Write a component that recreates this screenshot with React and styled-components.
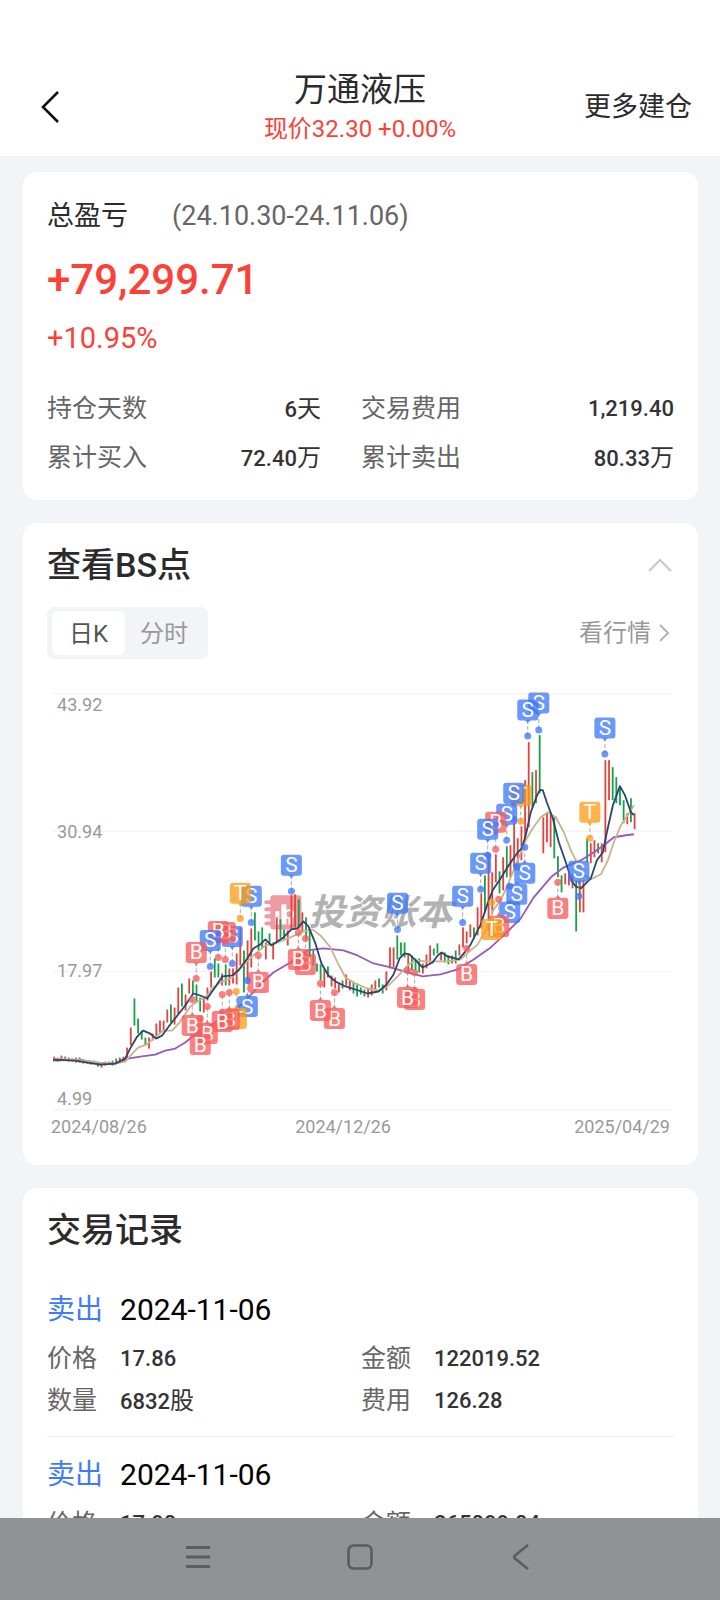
import { useState } from 'react';
import styled, { createGlobalStyle } from 'styled-components';

const GlobalStyle = createGlobalStyle`
  * {
    box-sizing: border-box;
  }
  body {
    margin: 0;
    background: #f2f4f7;
    font-family: Roboto, "Noto Sans CJK SC", sans-serif;
    color: #2b2b2b;
  }
  button {
    border: 0;
    padding: 0;
    background: none;
    font-family: inherit;
    cursor: pointer;
  }
`

const stats = [
  { label: "持仓天数", value: "6", unit: "天" },
  { label: "交易费用", value: "1,219.40" },
  { label: "累计买入", value: "72.40", unit: "万" },
  { label: "累计卖出", value: "80.33", unit: "万" },
]

const records = [
  { id: 1, side: "卖出", date: "2024-11-06", price: "17.86", amount: "122019.52", count: "6832", fee: "126.28" },
  { id: 2, side: "卖出", date: "2024-11-06", price: "17.90", amount: "265099.04", count: "14810", fee: "274.06" },
]

// one entry per trading day: colour, high, low (chart units)
const candles = `
r1056,1060 g1057,1061 r1055,1060 r1056,1060 g1057,1061 r1058,1061 r1057,1062 g1057,1062
r1059,1063 g1060,1063 r1060,1064 r1060,1063 g1061,1066 r1063,1067 r1061,1065 g1061,1064
g1060,1065 r1058,1062 g1057,1061 r1056,1061 r1047,1058 r1027,1045 g998,1025 g1018,1033
g1030,1039 g1037,1045 r1037,1048 r1033,1040 r1023,1037 r1020,1033 r1020,1030 r1009,1022
g1004,1022 r1007,1024 r987,1014 g983,1006 r994,1010 r978,993 g980,993 g984,1002
g997,1011 r997,1012 r987,1000 r971,987 g958,977 g963,977 r973,985 g964,985
r968,985 r968,983 r953,984 r927,965 g950,992 r940,983 r928,967 g912,940
g931,950 g927,948 r942,959 g933,943 r942,959 r917,942 g919,938 g929,940
r930,945 r895,928 r894,927 g899,927 r912,932 g917,940 g930,958 g950,965
g963,971 g964,980 r969,987 g966,977 r975,986 r977,988 r982,992 g980,988
r974,985 r980,990 g982,993 g983,996 g987,994 g989,996 r988,997 r984,995
r980,989 g978,987 g984,993 r971,990 r947,968 r947,967 g935,959 g942,955
g942,957 r953,972 g955,970 g958,970 g958,972 r963,973 r954,968 r945,963
g948,955 g943,953 r952,960 g952,962 g955,964 r955,963 g950,963 r944,955
r927,947 r931,943 r924,937 g927,937 r907,935 r893,928 g875,912 r857,930
r872,910 r854,882 g871,893 r857,890 g846,877 r845,877 r823,867 r838,863
r826,860 r780,842 r742,827 g772,807 r770,803 g735,793 r817,853 r813,842
r812,847 g817,858 g856,877 g875,892 r873,884 r873,885 r873,888 g880,931
r880,912 r880,912 g838,862 r843,863 r840,857 g843,853 r843,862 r760,852
r760,800 g767,800 g777,803 g787,805 g800,823 r813,824 g798,822 r813,829
`.trim().split(/\s+/).map((c) => {
  const [high, low] = c.slice(1).split(",").map(Number);
  return { up: c[0] === "r", high, low };
})

const averages = [
  { color: "#9b59b6", points: "53,1060 80,1059 100,1063 115,1063 128,1058 140,1056 155,1054 165,1050 175,1048 185,1042 200,1030 215,1022 240,1005 250,995 262,982 273,972 290,962 307,950 323,948 343,950 357,955 373,963 390,967 407,972 422,976 440,974 457,969 473,959 490,947 503,935 520,918 533,897 550,877 563,867 580,860 593,852 603,845 613,837 625,835 633,834" },
  { color: "#c8b48c", points: "53,1058 75,1059 100,1062 115,1063 125,1061 133,1052 138,1047 146,1044 156,1036 163,1030 172,1030 180,1021 190,1006 197,1001 205,997 212,988 220,982 232,977 243,965 253,955 265,945 275,943 290,937 303,931 312,929 320,935 330,947 337,962 345,977 355,983 367,988 378,990 388,985 398,975 408,964 415,960 425,961 447,961 460,959 470,950 477,944 485,930 493,909 500,900 508,882 515,865 525,840 532,828 540,817 547,812 555,817 563,832 570,850 576,862 582,874 590,879 600,874 607,860 613,842 620,825 628,813 633,805" },
  { color: "#28466e", points: "53,1059 75,1060 100,1064 115,1063 125,1058 130,1048 137,1036 143,1030 150,1033 156,1038 162,1035 170,1024 178,1014 185,1005 193,993 200,995 207,998 214,988 222,976 232,975 238,970 247,958 253,948 260,944 265,939 271,945 283,937 291,929 297,928 303,921 308,926 315,943 321,963 328,975 335,981 345,986 355,989 367,993 378,991 386,984 393,974 399,958 404,953 409,954 417,962 422,967 432,962 437,955 441,952 447,956 458,959 464,952 470,944 480,924 487,903 492,890 500,878 508,865 517,852 521,848 525,835 530,812 536,796 539,790 542,790 546,802 552,818 558,842 565,862 571,881 575,886 580,888 585,883 590,878 596,860 602,852 606,832 612,805 619,786 624,795 630,812 633,815" },
]

// [type, x, badge y, dot y]
const marks = [
  ["B", 196, 952, 978], ["S", 210, 940, 966], ["B", 218, 931, 957], ["B", 225, 932, 959],
  ["S", 232, 936, 963], ["T", 240, 893, 918], ["S", 251, 896, 922], ["B", 192, 1025, 999],
  ["B", 207, 1033, 1006], ["B", 200, 1044, 1018], ["B", 222, 1021, 994], ["B", 229, 1019, 992],
  ["T", 236, 1018, 991], ["S", 247, 1006, 980], ["B", 258, 982, 955], ["S", 291, 865, 891],
  ["B", 298, 959, 932], ["B", 305, 964, 938], ["B", 320, 1010, 983], ["B", 334, 1018, 992],
  ["S", 397, 903, 929], ["B", 407, 997, 970], ["B", 414, 999, 972], ["S", 462, 896, 922],
  ["B", 466, 974, 948], ["S", 480, 863, 889], ["S", 487, 829, 855], ["B", 495, 822, 849],
  ["S", 506, 814, 840], ["S", 513, 793, 819], ["T", 520, 795, 821], ["S", 527, 710, 736],
  ["S", 538, 703, 730], ["S", 604, 728, 754], ["T", 589, 812, 838], ["B", 557, 908, 882],
  ["S", 578, 871, 896], ["S", 524, 873, 847], ["S", 516, 894, 867], ["S", 509, 912, 886],
  ["B", 498, 926, 899], ["T", 491, 929, 902],
].sort((a, b) => b[1] - a[1])

const markColors = { B: "#fa5a5a", S: "#3c78fa", T: "#ff9b14" }

const gridLines = [
  { y: 694, label: "43.92", textY: 711 },
  { y: 831, label: "30.94", textY: 838 },
  { y: 971, label: "17.97", textY: 977 },
  { y: 1109, label: "4.99", textY: 1104 },
]

const Mark = ({ type, x, y, dot }) => {
  const dir = dot > y ? 1 : -1;
  const edge = y + dir * 10;
  return (
    <g>
      <line x1={x} x2={x} y1={edge} y2={dot} stroke="#aaa" strokeDasharray="4 2" />
      <g fill={markColors[type]} fillOpacity="0.76">
        <circle cx={x} cy={dot} r="3.5" />
        <path d={`M${x - 3} ${edge}L${x} ${edge + dir * 3}L${x + 3} ${edge}Z`} />
        <rect x={x - 10.5} y={y - 10.5} width="21" height="21" rx="3" />
      </g>
      <text x={x} y={y + 7} fontSize="21" fill="#fff" textAnchor="middle">{type}</text>
    </g>
  )
}

const KChart = () => (
  <ChartSvg viewBox="47 680 626 432" role="img" aria-label="日K">
    {gridLines.map((g) => (
      <g key={g.label}>
        <line x1="53" x2="671" y1={g.y} y2={g.y} stroke="#f4f4f5" strokeWidth="1.5" />
        <text x="57" y={g.textY} fontSize="18" fill="#999">{g.label}</text>
      </g>
    ))}
    <g fill="#ee9aa4">
      <rect x="270" y="895" width="31" height="34" rx="3" />
      {[901, 908, 915, 922].map((y) => (
        <rect key={y} x="264" y={y - 1} width="10" height="4" rx="2" />
      ))}
      <path d="M275 924v-13h4v13zM281 924v-20h5v20zM288 924v-6h4v6z" fill="#fff" />
      <circle cx="289" cy="914" r="4" fill="none" stroke="#fff" strokeWidth="2" />
    </g>
    <text x="308" y="925" fontSize="36" fontWeight="700" fontStyle="italic" fill="#b2b2b2">投资账本</text>
    {candles.map((c, i) => (
      <rect
        key={i}
        x={53.2 + i * 3.645}
        y={c.high}
        width="1.8"
        height={c.low - c.high}
        fill={c.up ? "#e8413c" : "#18a04b"}
      />
    ))}
    {averages.map((a) => (
      <polyline key={a.color} points={a.points} fill="none" stroke={a.color} strokeWidth="1.8" strokeLinejoin="round" />
    ))}
    {marks.map(([type, x, y, dot]) => (
      <Mark key={`${x}-${y}`} type={type} x={x} y={y} dot={dot} />
    ))}
  </ChartSvg>
)

export default function App() {
  const [tab, setTab] = useState("day");
  const [open, setOpen] = useState(true);

  return (
    <Screen>
      <GlobalStyle />
      <Header>
        <BackButton aria-label="返回">
          <svg width="20" height="32" viewBox="0 0 20 32" fill="none" stroke="#111" strokeWidth="2.6">
            <path d="M18 1L3 16L18 31" />
          </svg>
        </BackButton>
        <HeaderTitle>
          <StockName>万通液压</StockName>
          <StockPrice>现价32.30 +0.00%</StockPrice>
        </HeaderTitle>
        <MoreButton>更多建仓</MoreButton>
      </Header>

      <Content>
        <Card>
          <ProfitHead>
            <span>总盈亏</span>
            <DateRange>(24.10.30-24.11.06)</DateRange>
          </ProfitHead>
          <Profit>+79,299.71</Profit>
          <Percent>+10.95%</Percent>
          <Stats>
            {stats.map((s) => (
              <Stat key={s.label}>
                <Label>{s.label}</Label>
                <Value>{s.value}{s.unit && <Unit>{s.unit}</Unit>}</Value>
              </Stat>
            ))}
          </Stats>
        </Card>

        <Card>
          <CardHead>
            <CardTitle>查看BS点</CardTitle>
            <FoldButton aria-label="收起" onClick={() => setOpen(!open)}>
              <svg width="24" height="14" viewBox="0 0 24 14" fill="none" stroke="#c8c8c8" strokeWidth="2">
                <path d={open ? "M1 13L12 2L23 13" : "M1 1L12 12L23 1"} />
              </svg>
            </FoldButton>
          </CardHead>
          {open && (
            <>
              <Toolbar>
                <Segment>
                  <SegmentButton $active={tab === "day"} onClick={() => setTab("day")}>日K</SegmentButton>
                  <SegmentButton $active={tab === "minute"} onClick={() => setTab("minute")}>分时</SegmentButton>
                </Segment>
                <QuoteLink href="#quote">
                  看行情
                  <svg width="10" height="18" viewBox="0 0 10 18" fill="none" stroke="#b4b4b4" strokeWidth="2">
                    <path d="M1 1L9 9L1 17" />
                  </svg>
                </QuoteLink>
              </Toolbar>
              <KChart />
              <AxisDates>
                <span>2024/08/26</span>
                <span>2024/12/26</span>
                <span>2025/04/29</span>
              </AxisDates>
            </>
          )}
        </Card>

        <Card>
          <CardTitle>交易记录</CardTitle>
          {records.map((r) => (
            <Record key={r.id}>
              <RecordHead>
                <Side>{r.side}</Side>
                <RecordDate>{r.date}</RecordDate>
              </RecordHead>
              <RecordGrid>
                <Field><Label>价格</Label><Value>{r.price}</Value></Field>
                <Field><Label>金额</Label><Value>{r.amount}</Value></Field>
                <Field><Label>数量</Label><Value>{r.count}<Unit>股</Unit></Value></Field>
                <Field><Label>费用</Label><Value>{r.fee}</Value></Field>
              </RecordGrid>
            </Record>
          ))}
        </Card>
      </Content>

      <SystemBar>
        <SystemButton aria-label="菜单">
          <svg width="26" height="26" viewBox="0 0 26 26" stroke="#5a5c5e" strokeWidth="3">
            <path d="M1 3.500H25M1 13H25M1 22.500H25" />
          </svg>
        </SystemButton>
        <SystemButton aria-label="主页">
          <svg width="26" height="26" viewBox="0 0 26 26" fill="none" stroke="#5a5c5e" strokeWidth="2.6">
            <rect x="1.500" y="1.500" width="23" height="23" rx="5" />
          </svg>
        </SystemButton>
        <SystemButton aria-label="后退">
          <svg width="26" height="26" viewBox="0 0 26 26" fill="none" stroke="#5a5c5e" strokeWidth="2.6">
            <path d="M19 1L6 11.500Q4 13 6 14.500L19 25" />
          </svg>
        </SystemButton>
      </SystemBar>
    </Screen>
  )
}

const Screen = styled.div`
  display: flex;
  flex-direction: column;
  height: 100vh;
`

const Header = styled.header`
  display: grid;
  grid-template-columns: 1fr auto 1fr;
  align-items: center;
  flex-shrink: 0;
  padding: 68px 28px 10px;
  background: #fff;
`

const BackButton = styled.button`
  justify-self: start;
  display: flex;
  padding-left: 12px;
`

const HeaderTitle = styled.div`
  text-align: center;
`

const StockName = styled.h1`
  margin: 0;
  font-size: 33px;
  font-weight: 400;
  line-height: 44px;
`

const StockPrice = styled.div`
  font-size: 24px;
  line-height: 34px;
  color: #fa4238;
`

const MoreButton = styled.button`
  justify-self: end;
  font-size: 27px;
  line-height: 36px;
  color: #2b2b2b;
`

const Content = styled.main`
  flex: 1;
  min-height: 0;
  overflow-y: auto;
  scrollbar-width: none;
  padding: 16px 22px 0 23px;
`

const Card = styled.section`
  padding: 24px;
  margin-bottom: 23px;
  border-radius: 14px;
  background: #fff;
`

const ProfitHead = styled.div`
  display: flex;
  gap: 44px;
  font-size: 27px;
  line-height: 40px;
`

const DateRange = styled.span`
  color: #666;
`

const Profit = styled.div`
  margin-top: 16px;
  font-size: 42px;
  font-weight: 500;
  line-height: 56px;
  color: #fa4238;
`

const Percent = styled.div`
  margin-top: 10px;
  font-size: 29px;
  line-height: 40px;
  color: #fa4238;
`

const Stats = styled.dl`
  display: grid;
  grid-template-columns: 7fr 8fr;
  column-gap: 40px;
  row-gap: 14px;
  margin: 34px 0 0;
`

const Stat = styled.div`
  display: flex;
  justify-content: space-between;
`

const Label = styled.dt`
  font-size: 25px;
  line-height: 34px;
  color: #666;
`

const Value = styled.dd`
  margin: 0;
  font-size: 22px;
  font-weight: 500;
  line-height: 34px;
  color: #333;
`

const Unit = styled.span`
  font-size: 24px;
  font-weight: 400;
`

const CardHead = styled.div`
  display: flex;
  justify-content: space-between;
  align-items: center;
`

const CardTitle = styled.h2`
  margin: 0;
  font-size: 34px;
  font-weight: 500;
  line-height: 36px;
`

const FoldButton = styled.button`
  display: flex;
  padding: 0 2px;
`

const Toolbar = styled.div`
  display: flex;
  justify-content: space-between;
  align-items: center;
  margin: 24px 0 21px;
`

const Segment = styled.div`
  display: flex;
  padding: 4px 5px;
  border-radius: 7px;
  background: #f2f4f7;
`

const SegmentButton = styled.button`
  min-width: 73px;
  height: 44px;
  padding: 0 15px 4px;
  border-radius: 6px;
  font-size: 24px;
  color: ${(p) => (p.$active ? "#555" : "#999")};
  background: ${(p) => (p.$active ? "#fff" : "transparent")};
`

const QuoteLink = styled.a`
  display: flex;
  align-items: center;
  gap: 8px;
  padding-right: 5px;
  font-size: 24px;
  line-height: 36px;
  color: #999;
  text-decoration: none;
`

const ChartSvg = styled.svg`
  display: block;
  width: 100%;
  height: auto;
`

const AxisDates = styled.div`
  display: grid;
  grid-template-columns: 7fr auto 8fr;
  padding: 2px 4px;
  font-size: 18px;
  line-height: 24px;
  color: #999;

  span:last-child {
    text-align: right;
  }
`

const Record = styled.article`
  padding: 18px 0 17px;
  border-bottom: 1px solid #f0f1f3;

  ${CardTitle} + & {
    padding-top: 42px;
  }
`

const RecordHead = styled.div`
  display: flex;
  align-items: center;
  gap: 17px;
  line-height: 40px;
`

const Side = styled.span`
  font-size: 28px;
  color: #3f7afc;
`

const RecordDate = styled.span`
  font-size: 30px;
  color: #000;
`

const RecordGrid = styled.dl`
  display: grid;
  grid-template-columns: 7fr 8fr;
  column-gap: 40px;
  row-gap: 8px;
  margin: 12px 0 0;
`

const Field = styled.div`
  display: flex;
  gap: 23px;
`

const SystemBar = styled.nav`
  display: flex;
  justify-content: center;
  gap: 136px;
  flex-shrink: 0;
  padding: 26px 0 30px;
  background: #909395;
`

const SystemButton = styled.button`
  display: flex;
`
